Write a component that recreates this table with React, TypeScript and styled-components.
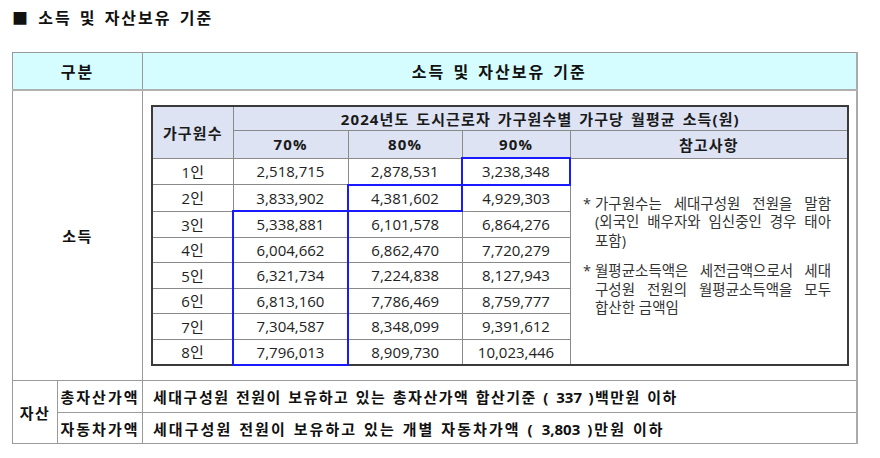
import styled, { createGlobalStyle } from "styled-components"

const FONT = `"Open Sans", "Noto Sans CJK KR", "Noto Sans", sans-serif`

const GlobalStyle = createGlobalStyle`
    body {
        margin: 0;
        background: #ffffff;
        font-family: ${FONT};
        color: #222222;
    }
`

const incomes = [
    { size: "1인", values: ["2,518,715", "2,878,531", "3,238,348"] },
    { size: "2인", values: ["3,833,902", "4,381,602", "4,929,303"] },
    { size: "3인", values: ["5,338,881", "6,101,578", "6,864,276"] },
    { size: "4인", values: ["6,004,662", "6,862,470", "7,720,279"] },
    { size: "5인", values: ["6,321,734", "7,224,838", "8,127,943"] },
    { size: "6인", values: ["6,813,160", "7,786,469", "8,759,777"] },
    { size: "7인", values: ["7,304,587", "8,348,099", "9,391,612"] },
    { size: "8인", values: ["7,796,013", "8,909,730", "10,023,446"] },
]

const notes = [
    ["가구원수는 세대구성원 전원을 말함", "(외국인 배우자와 임신중인 경우 태아", "포함)"],
    ["월평균소득액은 세전금액으로서 세대", "구성원 전원의 월평균소득액을 모두", "합산한 금액임"],
]

type Edges = { t?: boolean; r?: boolean; b?: boolean; l?: boolean }

// blue boxes: 90% for 1인, 80% for 2인, 70% for 3인 and up
function highlight(row: number, col: number): Edges | undefined {
    if (row === 0 && col === 2) return { t: true, r: true, b: true, l: true }
    if (row === 1 && col === 1) return { t: true, r: true, b: true, l: true }
    if (row >= 2 && col === 0) return { t: row === 2, r: true, b: row === 7, l: true }
    return undefined
}

export default function App() {
    return (
        <Page>
            <GlobalStyle />
            <Title>■ 소득 및 자산보유 기준</Title>

            <Outer>
                <colgroup>
                    <Col $w={45} />
                    <Col $w={85} />
                    <Col $w={714} />
                </colgroup>
                <tbody>
                    <tr>
                        <HeadCell colSpan={2}>구분</HeadCell>
                        <HeadCell>소득 및 자산보유 기준</HeadCell>
                    </tr>
                    <tr>
                        <LabelCell colSpan={2}>소득</LabelCell>
                        <NestCell>
                            <Inner>
                                <colgroup>
                                    <Col $w={81} />
                                    <Col $w={115} />
                                    <Col $w={114} />
                                    <Col $w={108} />
                                    <Col $w={278} />
                                </colgroup>
                                <tbody>
                                    <tr>
                                        <InnerHead rowSpan={2}>가구원수</InnerHead>
                                        <InnerHead colSpan={4} $h={23}>
                                            2024년도 도시근로자 가구원수별 가구당 월평균 소득(원)
                                        </InnerHead>
                                    </tr>
                                    <tr>
                                        <InnerHead $h={26}>70%</InnerHead>
                                        <InnerHead $h={26}>80%</InnerHead>
                                        <InnerHead $h={26}>90%</InnerHead>
                                        <InnerHead $h={26}>참고사항</InnerHead>
                                    </tr>
                                    {incomes.map((row, i) => (
                                        <tr key={row.size}>
                                            <DataCell>{row.size}</DataCell>
                                            {row.values.map((v, j) => (
                                                <DataCell key={v} $hl={highlight(i, j)}>
                                                    {v}
                                                </DataCell>
                                            ))}
                                            {i === 0 && (
                                                <NoteCell rowSpan={8}>
                                                    {notes.map((lines) => (
                                                        <Note key={lines[0]}>
                                                            <Bullet>*</Bullet>
                                                            <NoteText>
                                                                {lines.map((line, k) => (
                                                                    <Line key={line} $last={k === lines.length - 1}>
                                                                        {line}
                                                                    </Line>
                                                                ))}
                                                            </NoteText>
                                                        </Note>
                                                    ))}
                                                </NoteCell>
                                            )}
                                        </tr>
                                    ))}
                                </tbody>
                            </Inner>
                        </NestCell>
                    </tr>
                    <tr>
                        <LabelCell rowSpan={2}>자산</LabelCell>
                        <SubLabel $h={31}>총자산가액</SubLabel>
                        <TextCell $spacing={1.5}>
                            세대구성원 전원이 보유하고 있는 총자산가액 합산기준 ( <Num>337</Num> )백만원 이하
                        </TextCell>
                    </tr>
                    <tr>
                        <SubLabel $h={30}>자동차가액</SubLabel>
                        <TextCell $spacing={2.05}>
                            세대구성원 전원이 보유하고 있는 개별 자동차가액 ( <Num>3,803</Num> )만원 이하
                        </TextCell>
                    </tr>
                </tbody>
            </Outer>
        </Page>
    )
}

const Page = styled.div`
    width: 880px;
    height: 458px;
    padding: 7px 12px 0;
    box-sizing: border-box;
    overflow: hidden;
`

const Title = styled.div`
    font-size: 16px;
    font-weight: 700;
    line-height: 22px;
    letter-spacing: 2px;
    word-spacing: 2px;
    color: #111111;
    margin-bottom: 23px;
`

const Col = styled.col<{ $w: number }>`
    width: ${({ $w }) => $w}px;
`

const Outer = styled.table`
    width: 844px;
    table-layout: fixed;
    border-collapse: collapse;
    border-top: 1px solid #555555;
    border-left: 1px solid #9a9a9a;
    border-right: 2px solid #aaaaaa;
    border-bottom: 1px solid #666666;
    font-size: 15px;

    td {
        border: 1px solid #9a9a9a;
        padding: 0;
    }
`

const HeadCell = styled.td`
    height: 36px;
    background: #d5fdff;
    text-align: center;
    font-size: 16px;
    font-weight: 700;
    letter-spacing: 2px;
    word-spacing: 2px;
    color: #111111;
    && {
        border-bottom: 2px solid #b0b0b0;
    }
`

const LabelCell = styled.td`
    text-align: center;
    vertical-align: middle;
    font-weight: 700;
    letter-spacing: 1.5px;
    color: #111111;
`

const SubLabel = styled.td<{ $h: number }>`
    height: ${({ $h }) => $h}px;
    text-align: center;
    font-weight: 700;
    letter-spacing: 2px;
    color: #111111;
`

const TextCell = styled.td<{ $spacing: number }>`
    && {
        padding-left: 10px;
    }
    font-weight: 700;
    letter-spacing: ${({ $spacing }) => $spacing}px;
    word-spacing: 1px;
    white-space: nowrap;
    color: #111111;
`

const Num = styled.span`
    letter-spacing: 0;
`

const NestCell = styled.td`
    && {
        padding: 14px 7px 14px 8px;
    }
`

const Inner = styled.table`
    width: 696px;
    table-layout: fixed;
    border-collapse: collapse;
    border: 2px solid #3a3a3a;

    && td {
        border: 1px solid #8a8a8a;
    }
`

const InnerHead = styled.td<{ $h?: number }>`
    height: ${({ $h }) => ($h ? `${$h}px` : "auto")};
    background: #dde3f3;
    text-align: center;
    font-weight: 700;
    letter-spacing: 1.1px;
    word-spacing: 2px;
    color: #1a1a1a;
`

const DataCell = styled.td<{ $hl?: Edges }>`
    height: 24.5px;
    text-align: center;
    color: #222222;
    &&& {
        ${({ $hl }) => ($hl?.t ? "border-top: 2px solid #1a1aff;" : "")}
        ${({ $hl }) => ($hl?.r ? "border-right: 2px solid #1a1aff;" : "")}
        ${({ $hl }) => ($hl?.b ? "border-bottom: 2px solid #1a1aff;" : "")}
        ${({ $hl }) => ($hl?.l ? "border-left: 2px solid #1a1aff;" : "")}
    }
`

const NoteCell = styled.td`
    vertical-align: middle;
    &&& {
        padding: 0 16px 10px 12px;
    }
    font-size: 14.5px;
    color: #333333;
`

const Note = styled.div`
    display: flex;
    & + & {
        margin-top: 12px;
    }
`

const Bullet = styled.span`
    width: 12px;
    flex: none;
    line-height: 18.5px;
`

const NoteText = styled.div`
    flex: 1;
`

const Line = styled.div<{ $last?: boolean }>`
    line-height: 18.5px;
    white-space: nowrap;
    text-align: justify;
    text-align-last: ${({ $last }) => ($last ? "left" : "justify")};
`
